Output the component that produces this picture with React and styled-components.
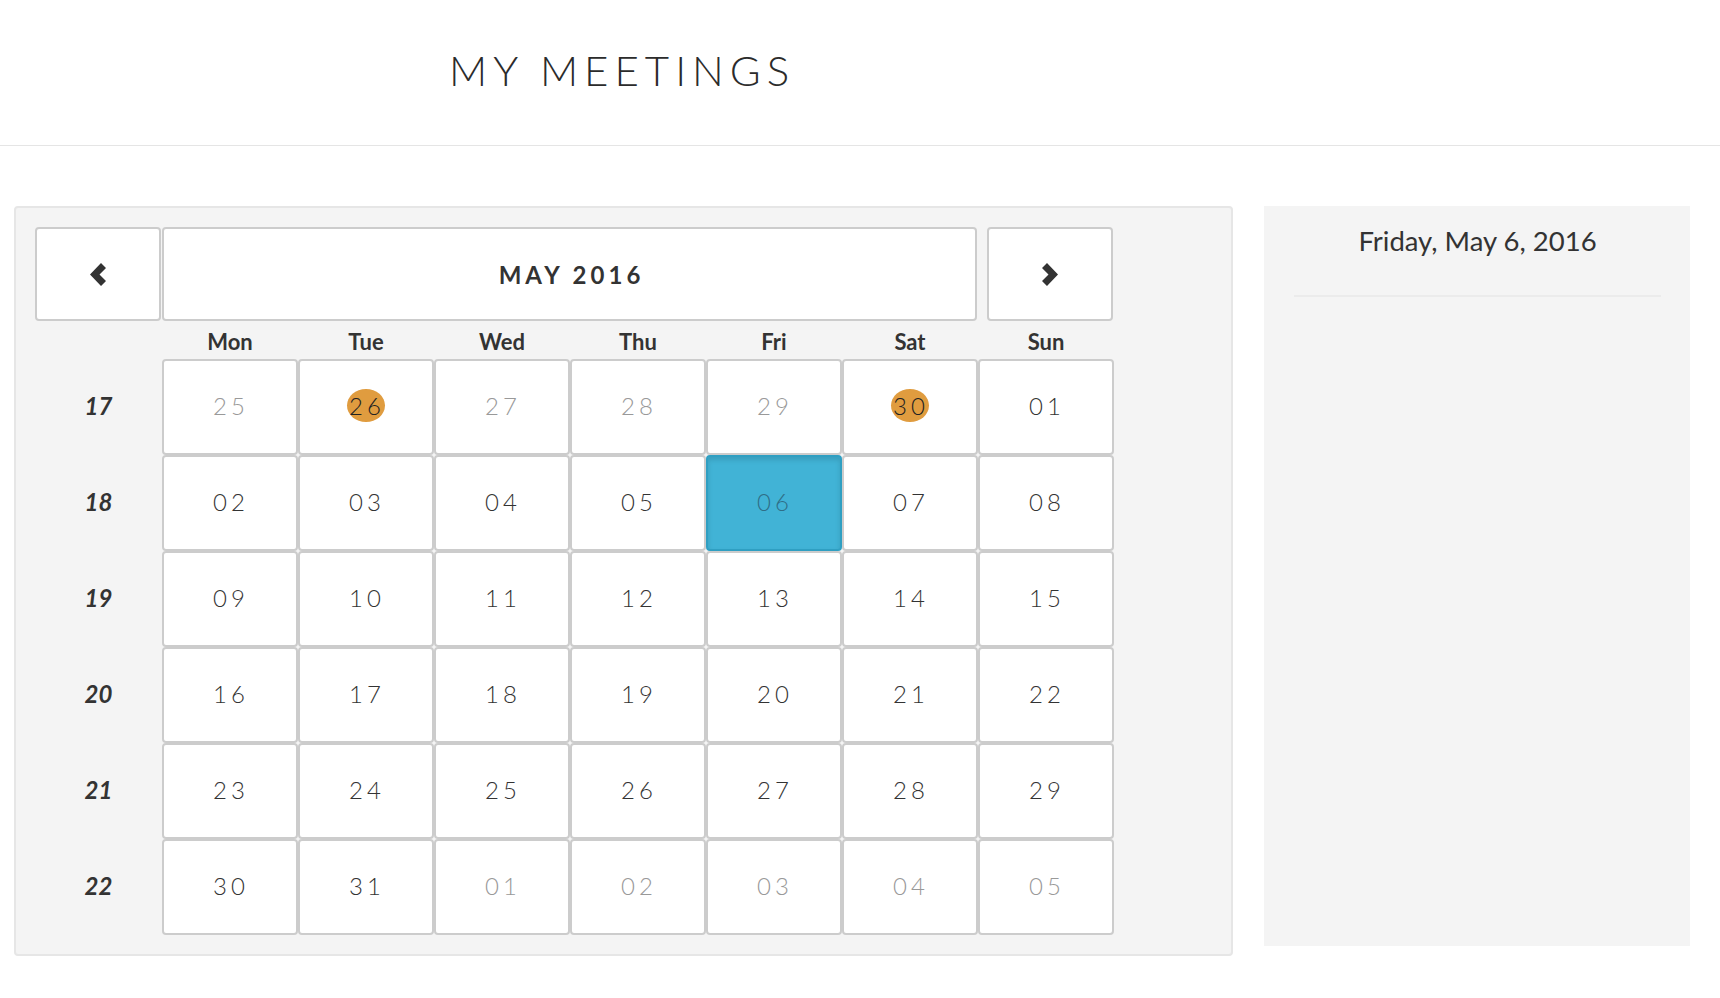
import React from "react";
import styled, { createGlobalStyle } from "styled-components";

const GlobalStyle = createGlobalStyle`
  html, body {
    margin: 0;
    padding: 0;
    background: #ffffff;
    font-family: Lato, "Open Sans", "Liberation Sans", sans-serif;
    color: #333333;
  }
  * { box-sizing: border-box; }
`;

const weeks = [
  { no: 17, days: [["25", "out"], ["26", "out", true], ["27", "out"], ["28", "out"], ["29", "out"], ["30", "out", true], ["01"]] },
  { no: 18, days: [["02"], ["03"], ["04"], ["05"], ["06", "sel"], ["07"], ["08"]] },
  { no: 19, days: [["09"], ["10"], ["11"], ["12"], ["13"], ["14"], ["15"]] },
  { no: 20, days: [["16"], ["17"], ["18"], ["19"], ["20"], ["21"], ["22"]] },
  { no: 21, days: [["23"], ["24"], ["25"], ["26"], ["27"], ["28"], ["29"]] },
  { no: 22, days: [["30"], ["31"], ["01", "out"], ["02", "out"], ["03", "out"], ["04", "out"], ["05", "out"]] },
];

const dayNames = ["Mon", "Tue", "Wed", "Thu", "Fri", "Sat", "Sun"];

const Chevron = ({ dir }) => (
  <svg width="16" height="23" viewBox="0 0 16 23">
    {dir === "left" ? (
      <polygon points="11,0 16,5 9.5,11.5 16,18 11,23 0,11.5" fill="#333" />
    ) : (
      <polygon points="5,0 0,5 6.5,11.5 0,18 5,23 16,11.5" fill="#333" />
    )}
  </svg>
);

const App = () => {
  return (
    <React.Fragment>
      <GlobalStyle />
      <Header>
        <Title>MY MEETINGS</Title>
      </Header>
      <Main>
        <CalendarPanel>
          <Nav>
            <NavButton>
              <Chevron dir="left" />
            </NavButton>
            <MonthButton>MAY 2016</MonthButton>
            <NavButton $gapLeft>
              <Chevron dir="right" />
            </NavButton>
          </Nav>
          <Grid>
            <span />
            {dayNames.map((d) => (
              <DayName key={d}>{d}</DayName>
            ))}
            {weeks.map((w) => (
              <React.Fragment key={w.no}>
                <WeekNo>{w.no}</WeekNo>
                {w.days.map(([label, kind, busy], i) => (
                  <Cell key={i} $selected={kind === "sel"}>
                    <DayNum $muted={kind === "out"} $selected={kind === "sel"} $busy={busy}>
                      {label}
                    </DayNum>
                  </Cell>
                ))}
              </React.Fragment>
            ))}
          </Grid>
        </CalendarPanel>
        <SidePanel>
          <SideTitle>Friday, May 6, 2016</SideTitle>
          <SideRule />
        </SidePanel>
      </Main>
    </React.Fragment>
  );
};

const Header = styled.div`
  height: 146px;
  border-bottom: 1px solid #e5e5e5;
  display: flex;
  align-items: center;
  padding: 0 0 6px 449px;
`;

const Title = styled.h1`
  margin: 0;
  font-family: Lato, "Open Sans", sans-serif;
  font-weight: 300;
  font-size: 42px;
  letter-spacing: 6px;
  color: #2b2b2b;
`;

const Main = styled.div`
  display: flex;
  align-items: flex-start;
  gap: 31px;
  padding: 60px 0 0 14px;
`;

const CalendarPanel = styled.div`
  width: 1219px;
  height: 750px;
  background: #f4f4f4;
  border: 2px solid #e6e6e6;
  border-radius: 4px;
  padding: 19px 19px 16px 19px;
`;

const Nav = styled.div`
  display: flex;
  width: 1078px;
  height: 94px;
`;

const NavButton = styled.div`
  width: 126px;
  flex: none;
  display: flex;
  align-items: center;
  justify-content: center;
  background: #ffffff;
  border: 2px solid #cccccc;
  border-radius: 4px;
  margin-left: ${(props) => (props.$gapLeft ? "10px" : "0")};
`;

const MonthButton = styled.div`
  flex: 1;
  margin-left: 1px;
  display: flex;
  align-items: center;
  justify-content: center;
  background: #ffffff;
  border: 2px solid #cccccc;
  border-radius: 4px;
  font-weight: 700;
  font-size: 24px;
  letter-spacing: 4px;
  padding-left: 4px;
  color: #333333;
`;

const Grid = styled.div`
  display: grid;
  width: 1078px;
  grid-template-columns: 127px repeat(7, 136px);
  grid-template-rows: 38px repeat(6, 96px);
`;

const DayName = styled.div`
  display: flex;
  align-items: center;
  justify-content: center;
  padding-top: 2px;
  font-weight: 700;
  font-size: 22px;
  color: #333333;
`;

const WeekNo = styled.div`
  display: flex;
  align-items: center;
  justify-content: center;
  padding-bottom: 3px;
  font-weight: 700;
  font-style: italic;
  font-size: 24px;
  color: #333333;
`;

const Cell = styled.div`
  display: flex;
  align-items: center;
  justify-content: center;
  background: ${(props) => (props.$selected ? "#41b3d6" : "#ffffff")};
  border: 2px solid ${(props) => (props.$selected ? "#2f9fc2" : "#cccccc")};
  border-radius: 4px;
  box-shadow: ${(props) => (props.$selected ? "inset 0 3px 5px rgba(0,0,0,0.12)" : "none")};
`;

const DayNum = styled.span`
  display: inline-flex;
  align-items: center;
  justify-content: center;
  margin-bottom: 4px;
  font-weight: 300;
  font-size: 24px;
  letter-spacing: 4px;
  padding-left: 2px;
  color: ${(props) => (props.$selected ? "#2f6e87" : props.$muted ? "#999999" : "#333333")};
  height: 33px;
  min-width: 33px;
  border-radius: 50%;
  background: ${(props) => (props.$busy ? "#e09c3f" : "transparent")};
  ${(props) => (props.$busy ? "color: #222222;" : "")}
`;

const SidePanel = styled.div`
  width: 426px;
  height: 740px;
  background: #f4f4f4;
  padding: 20px 29px 0 30px;
`;

const SideTitle = styled.div`
  text-align: center;
  font-size: 27.5px;
  line-height: 30px;
  color: #333333;
`;

const SideRule = styled.div`
  margin-top: 39px;
  height: 2px;
  background: #ebebeb;
`;

export default App;
